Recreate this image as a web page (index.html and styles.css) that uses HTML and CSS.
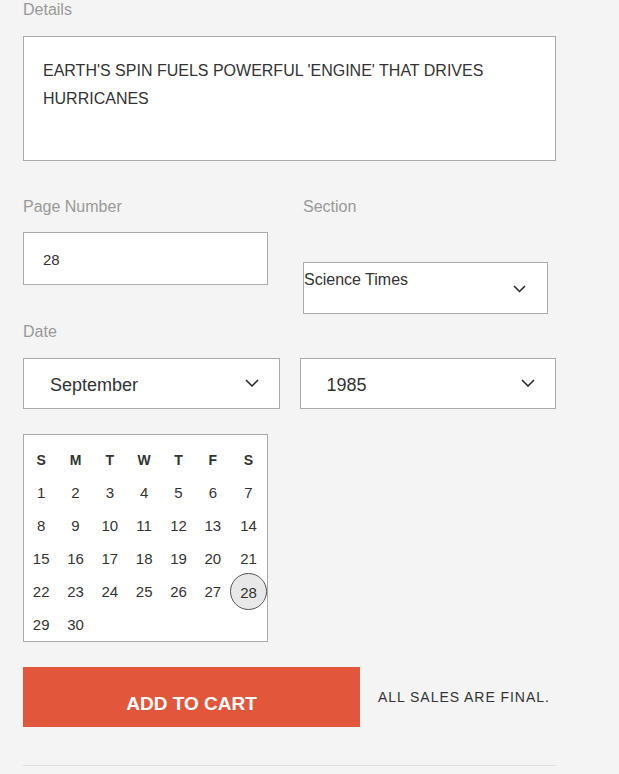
FILE: index.html
```html
<!DOCTYPE html>
<html lang="en">
<head>
<meta charset="utf-8">
<title>Order Details</title>
<link rel="stylesheet" href="styles.css">
</head>
<body>
<main class="form">
  <div class="label">Details</div>
  <div class="textarea">EARTH'S SPIN FUELS POWERFUL 'ENGINE' THAT DRIVES HURRICANES</div>

  <div class="row">
    <div class="col">
      <div class="label">Page Number</div>
      <div class="input">28</div>
    </div>
    <div class="col">
      <div class="label">Section</div>
      <div class="select section-select">
        <span class="section-text">Science Times</span>
        <svg class="chev" width="13" height="8" viewBox="0 0 13 8"><polyline points="1,1 6.5,6.5 12,1" fill="none" stroke="#222" stroke-width="1.5"/></svg>
      </div>
    </div>
  </div>

  <div class="label date-label">Date</div>
  <div class="date-row">
    <div class="select date-select">
      <span>September</span>
      <svg class="chev" width="14" height="8" viewBox="0 0 14 8"><polyline points="1,1 7,7 13,1" fill="none" stroke="#222" stroke-width="1.5"/></svg>
    </div>
    <div class="select date-select">
      <span>1985</span>
      <svg class="chev" width="14" height="8" viewBox="0 0 14 8"><polyline points="1,1 7,7 13,1" fill="none" stroke="#222" stroke-width="1.5"/></svg>
    </div>
  </div>

  <div class="calendar">
    <span class="dow">S</span><span class="dow">M</span><span class="dow">T</span><span class="dow">W</span><span class="dow">T</span><span class="dow">F</span><span class="dow">S</span>
    <span>1</span><span>2</span><span>3</span><span>4</span><span>5</span><span>6</span><span>7</span>
    <span>8</span><span>9</span><span>10</span><span>11</span><span>12</span><span>13</span><span>14</span>
    <span>15</span><span>16</span><span>17</span><span>18</span><span>19</span><span>20</span><span>21</span>
    <span>22</span><span>23</span><span>24</span><span>25</span><span>26</span><span>27</span><span class="selected"><b class="ring">28</b></span>
    <span>29</span><span>30</span>
  </div>

  <div class="cart-row">
    <button class="cart-btn">ADD TO CART</button>
    <span class="final">ALL SALES ARE FINAL.</span>
  </div>
  <hr class="divider">
</main>
</body>
</html>
```

FILE: styles.css
```css
* { box-sizing: border-box; }
html, body {
  margin: 0;
  padding: 0;
  background: #f4f4f4;
}
body {
  font-family: "Liberation Sans", Arial, sans-serif;
  color: #333;
}
.form {
  width: 556px;
  padding-left: 23px;
}
.label {
  font-size: 16px;
  line-height: 20px;
  color: #999;
}
.textarea {
  margin-top: 16px;
  height: 125px;
  width: 533px;
  background: #fff;
  border: 1px solid #aaa;
  padding: 20px 19px;
  font-size: 16px;
  line-height: 28px;
  color: #333;
}
.row {
  display: flex;
  gap: 35px;
  margin-top: 36px;
}
.col {
  width: 245px;
}
.input {
  margin-top: 15px;
  height: 53px;
  background: #fff;
  border: 1px solid #aaa;
  display: flex;
  align-items: center;
  padding: 2px 19px 0;
  font-size: 15px;
  color: #333;
}
.select {
  background: #fff;
  border: 1px solid #aaa;
  display: flex;
  justify-content: space-between;
  color: #333;
}
.section-select {
  margin-top: 45px;
  height: 52px;
  align-items: center;
  padding-right: 21px;
  font-size: 16px;
}
.section-text {
  align-self: flex-start;
  padding-top: 7px;
  line-height: 20px;
}
.section-select .chev { margin-top: 2px; }
.date-label {
  margin-top: 8px;
}
.date-row {
  margin-top: 16px;
  display: flex;
  gap: 20px;
  width: 533px;
}
.date-select {
  flex: 1;
  height: 51px;
  align-items: center;
  padding: 4px 20px 0 26px;
  font-size: 18px;
}
.date-select .chev { margin-top: -6px; }
.calendar {
  margin-top: 25px;
  width: 245px;
  height: 208px;
  background: #fff;
  border: 1px solid #aaa;
  padding-top: 8px;
  display: grid;
  grid-template-columns: repeat(7, 1fr);
  grid-auto-rows: 33px;
  font-size: 15px;
  color: #333;
}
.calendar span {
  display: flex;
  align-items: center;
  justify-content: center;
}
.calendar .dow {
  font-weight: bold;
  font-size: 14px;
  color: #333;
}
.ring {
  font-weight: normal;
  display: flex;
  align-items: center;
  justify-content: center;
  width: 37px;
  height: 37px;
  margin: -2px 0;
  border-radius: 50%;
  background: #e8e8e8;
  border: 1px solid #555;
  padding-top: 1px;
}
.cart-row {
  margin-top: 25px;
  display: flex;
  align-items: center;
  gap: 18px;
}
.cart-btn {
  width: 337px;
  height: 60px;
  border: 0;
  margin: 0;
  background: #e2573b;
  color: #fff;
  font-family: "Liberation Sans", Arial, sans-serif;
  font-weight: bold;
  font-size: 19px;
  padding: 14px 0 0;
  letter-spacing: 0;
}
.final {
  font-size: 14px;
  letter-spacing: 0.95px;
  color: #333;
}
.divider {
  margin: 38px 0 0;
  width: 533px;
  border: 0;
  border-top: 1px solid #dedede;
  height: 0;
}
```
